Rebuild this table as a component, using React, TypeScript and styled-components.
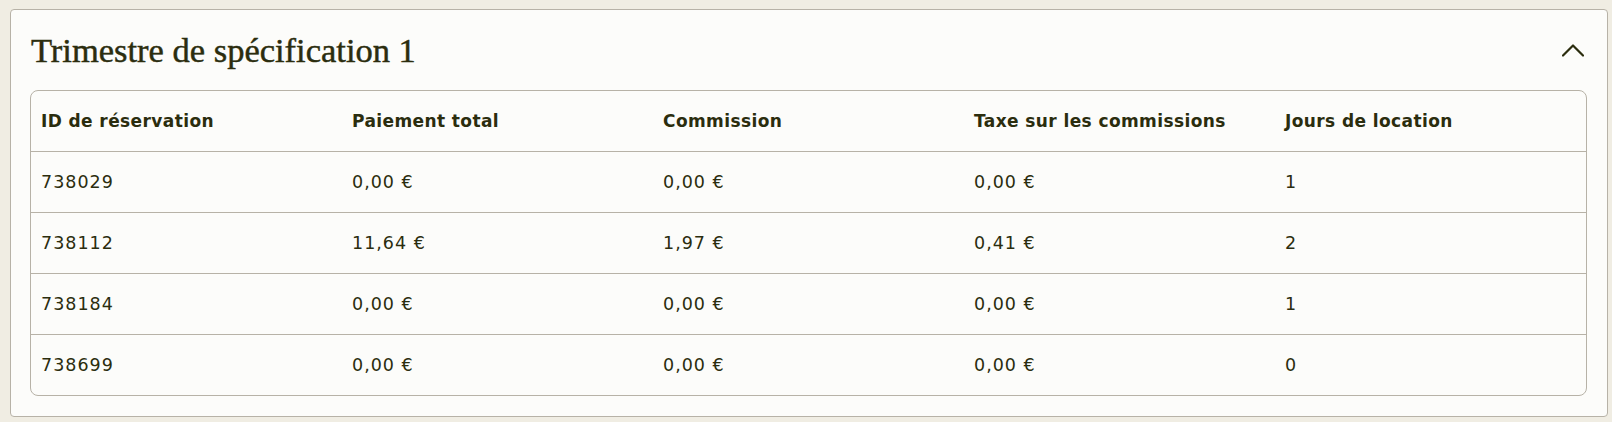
import styled, { createGlobalStyle } from "styled-components";

const Colors = {
  page: "#f0ede3",
  card: "#fcfcfa",
  border: "#b7b2a7",
  text: "#2b2d0e",
};

const GlobalStyle = createGlobalStyle`
  html, body {
    margin: 0;
    padding: 0;
    background: ${Colors.page};
  }
  body {
    font-family: "DejaVu Sans", Inter, sans-serif;
    color: ${Colors.text};
  }
`;

type Row = {
  id: string;
  total: string;
  commission: string;
  tax: string;
  days: string;
};

const rows: Row[] = [
  { id: "738029", total: "0,00 €", commission: "0,00 €", tax: "0,00 €", days: "1" },
  { id: "738112", total: "11,64 €", commission: "1,97 €", tax: "0,41 €", days: "2" },
  { id: "738184", total: "0,00 €", commission: "0,00 €", tax: "0,00 €", days: "1" },
  { id: "738699", total: "0,00 €", commission: "0,00 €", tax: "0,00 €", days: "0" },
];

const headers = [
  "ID de réservation",
  "Paiement total",
  "Commission",
  "Taxe sur les commissions",
  "Jours de location",
];

const ChevronUp = () => (
  <svg width="22" height="14" viewBox="0 0 22 14" fill="none">
    <polyline
      points="1,12.5 11,2.5 21,12.5"
      stroke={Colors.text}
      strokeWidth="2.2"
      strokeLinecap="round"
      strokeLinejoin="round"
    />
  </svg>
);

export default function App() {
  return (
    <>
      <GlobalStyle />
      <PageContainer>
        <Card>
          <CardHeader>
            <Title>Trimestre de spécification 1</Title>
            <ToggleButton aria-label="Réduire">
              <ChevronUp />
            </ToggleButton>
          </CardHeader>
          <TableFrame>
            <Table>
              <thead>
                <tr>
                  {headers.map((h) => (
                    <HeadCell key={h}>{h}</HeadCell>
                  ))}
                </tr>
              </thead>
              <tbody>
                {rows.map((r, i) => (
                  <BodyRow key={r.id} $last={i === rows.length - 1}>
                    <Cell>{r.id}</Cell>
                    <Cell>{r.total}</Cell>
                    <Cell>{r.commission}</Cell>
                    <Cell>{r.tax}</Cell>
                    <Cell>{r.days}</Cell>
                  </BodyRow>
                ))}
              </tbody>
            </Table>
          </TableFrame>
        </Card>
      </PageContainer>
    </>
  );
}

const PageContainer = styled.div`
  box-sizing: border-box;
  height: 422px;
  padding: 9px 4px 0 10px;
`;

const Card = styled.section`
  box-sizing: border-box;
  background: ${Colors.card};
  border: 1px solid ${Colors.border};
  border-radius: 4px;
  padding: 0 20px 20px 19px;
`;

const CardHeader = styled.div`
  height: 80px;
  display: flex;
  align-items: center;
  justify-content: space-between;
  padding-left: 1px;
  padding-right: 3px;
`;

const Title = styled.h2`
  margin: 0;
  font-family: "Liberation Serif", "Times New Roman", serif;
  font-weight: normal;
  font-size: 34.5px;
  line-height: 1;
  color: ${Colors.text};
  -webkit-text-stroke: 0.45px ${Colors.text};
  padding-top: 1px;
`;

const ToggleButton = styled.button`
  border: none;
  background: none;
  padding: 0;
  display: flex;
  cursor: pointer;
`;

const TableFrame = styled.div`
  border: 1px solid ${Colors.border};
  border-radius: 8px;
  overflow: hidden;
`;

const Table = styled.table`
  width: 100%;
  table-layout: fixed;
  border-collapse: collapse;
`;

const HeadCell = styled.th`
  height: 60px;
  padding: 0 10px;
  text-align: left;
  font-size: 17px;
  font-weight: 700;
  letter-spacing: 0.4px;
  color: ${Colors.text};
  border-bottom: 1px solid ${Colors.border};
  white-space: nowrap;
`;

const BodyRow = styled.tr<{ $last: boolean }>`
  border-bottom: ${(p) => (p.$last ? "none" : `1px solid ${Colors.border}`)};
`;

const Cell = styled.td`
  height: 60px;
  padding: 0 10px;
  font-size: 17.5px;
  font-weight: 400;
  letter-spacing: 1px;
  color: ${Colors.text};
`;
